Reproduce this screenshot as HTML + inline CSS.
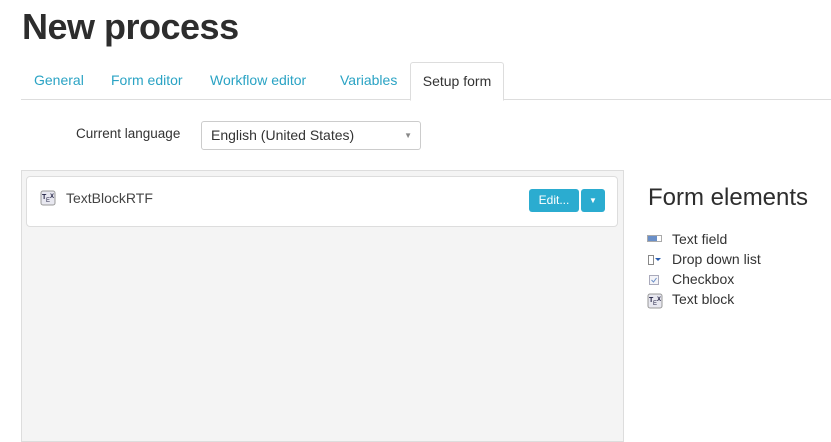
<!DOCTYPE html>
<html><head><style>
body{margin:0;width:831px;height:428px;overflow:hidden;background:#fff;font-family:"Liberation Sans",sans-serif;color:#333;position:relative}
.a{position:absolute}
h1{position:absolute;left:22px;top:6px;margin:0;font-size:36px;font-weight:bold;color:#2d2d2d;letter-spacing:-0.5px}
.tabs{left:21px;top:62px;width:810px;height:37px;border-bottom:1px solid #ddd}
.tab{position:absolute;top:10px;font-size:14px;color:#2aa3c4}
.act{position:absolute;left:389px;top:0;width:92px;height:37px;border:1px solid #ddd;border-bottom:1px solid #fff;border-radius:3px 3px 0 0;background:#fff;color:#333;font-size:14px;text-align:center;line-height:36px}
.sel{left:201px;top:121px;width:218px;height:27px;border:1px solid #ccc;border-radius:3px;font-size:14px;line-height:27px;text-indent:9px}
.panel{left:21px;top:170px;width:601px;height:270px;background:#f4f4f4;border:1px solid #ddd}
.card{left:26px;top:176px;width:590px;height:49px;background:#fff;border:1px solid #ddd;border-radius:4px}
.btn{background:#2bacd0;color:#fff;font-size:12px;border-radius:3px;text-align:center;line-height:23px;height:23px}
.li{position:absolute;left:672px;font-size:14px;color:#333}
</style></head><body>
<h1>New process</h1>
<div class="a tabs">
<span class="tab" style="left:13px">General</span>
<span class="tab" style="left:90px">Form editor</span>
<span class="tab" style="left:189px">Workflow editor</span>
<span class="tab" style="left:319px">Variables</span>
<div class="act">Setup form</div>
</div>
<div class="a" style="left:76px;top:126px;font-size:13.5px">Current language</div>
<div class="a sel">English (United States)<span style="position:absolute;right:8px;top:0;font-size:8px;color:#888">▼</span></div>
<div class="a panel"></div>
<div class="a card"></div>
<svg class="a" style="left:40px;top:190px" width="16" height="16"><rect x="1" y="1" width="14" height="14" rx="2" fill="#e8e8f0" stroke="#999"/><text x="2" y="9" font-size="7" font-weight="bold" fill="#224">T</text><text x="6" y="12" font-size="6" fill="#224">E</text><text x="10" y="8" font-size="6" font-weight="bold" fill="#224">X</text></svg>
<div class="a" style="left:66px;top:190px;font-size:14px;color:#444">TextBlockRTF</div>
<div class="a btn" style="left:529px;top:189px;width:50px">Edit...</div>
<div class="a btn" style="left:581px;top:189px;width:24px;font-size:8px">▼</div>
<div class="a" style="left:648px;top:184px;font-size:24px;color:#2d2d2d">Form elements</div>
<svg class="a" style="left:647px;top:234px" width="16" height="76">
<rect x="1" y="2" width="9" height="5" fill="#6a8fc8"/><rect x="0.5" y="1.5" width="14" height="6" fill="none" stroke="#aaa"/>
<rect x="1.5" y="21.5" width="5" height="9" fill="none" stroke="#888"/><path d="M8 24h6l-3 3z" fill="#2a5db0"/>
<rect x="2.5" y="41.5" width="9" height="9" fill="#f4f4f8" stroke="#aab"/><path d="M4.5 46l2 2 3-4" stroke="#6a8fc8" fill="none"/>
<rect x="1" y="60" width="14" height="14" rx="2" fill="#e8e8f0" stroke="#999"/><text x="2" y="68" font-size="7" font-weight="bold" fill="#224">T</text><text x="6" y="71" font-size="6" fill="#224">E</text><text x="10" y="67" font-size="6" font-weight="bold" fill="#224">X</text>
</svg>
<div class="li" style="top:231px">Text field</div>
<div class="li" style="top:251px">Drop down list</div>
<div class="li" style="top:271px">Checkbox</div>
<div class="li" style="top:291px">Text block</div>
</body></html>
